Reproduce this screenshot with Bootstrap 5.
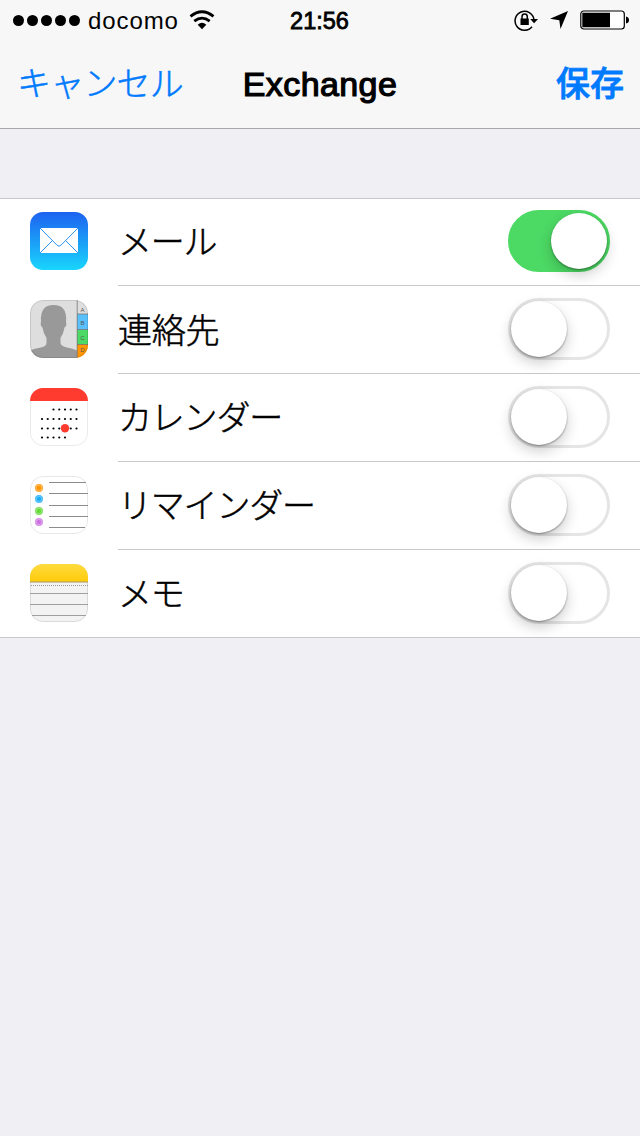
<!DOCTYPE html>
<html lang="ja">
<head>
<meta charset="utf-8">
<meta name="viewport" content="width=device-width, initial-scale=1">
<title>Exchange</title>
<link href="https://cdn.jsdelivr.net/npm/bootstrap@5.3.0/dist/css/bootstrap.min.css" rel="stylesheet">
<style>
body{background:#efeff4;color:#000;font-family:"Liberation Sans","Noto Sans CJK JP",sans-serif;min-height:100vh;overflow:hidden}
svg{display:block;flex:none}
.topbar{height:129px;background:#f7f7f7;border-bottom:1px solid #a7a7ac}
.status{height:40px;padding:0 11px 0 13px}
.side{flex:1 1 0}
.signal i{width:11px;height:11px;border-radius:50%;background:#000}
.signal{gap:3px}
.carrier{font:24px/28px "Liberation Sans",sans-serif;letter-spacing:.9px;margin:2px 0 0 8px}
.wifi{margin-left:10px}
.glyph{margin-left:12px}
.clock{font:23.500px/28px "Liberation Sans",sans-serif;-webkit-text-stroke:.8px #000;margin:2px 3px 0 0}
.titlebar{height:88px;padding:0 16px 0 17px}
.titlebar a{color:#007aff;font-size:34px;line-height:50px;font-family:"Noto Sans CJK JP",sans-serif;font-weight:300;letter-spacing:-.8px;-webkit-text-stroke:.5px #007aff;position:relative;top:-2px}
.titlebar a.save{font-weight:500;letter-spacing:0;-webkit-text-stroke:.8px #007aff}
.titlebar h1{font:34px/50px "Liberation Sans",sans-serif;letter-spacing:.4px;-webkit-text-stroke:1.200px #000;padding-right:1px}
.accounts{margin-top:69px;background:#fff;border-top:1px solid #c8c7cc;border-bottom:1px solid #c8c7cc;list-style:none}
.account{height:88px;padding-left:30px}
.account:first-child{margin-top:-1px}
.account:last-child{height:87px}
.account>svg{margin-top:14px}
.cell{height:88px;margin-left:30px;padding:0 30px 1px 0;border-bottom:1px solid #c8c7cc}
.account:last-child .cell{height:87px;border-bottom:0}
.cell label{font-family:"Noto Sans CJK JP",sans-serif;font-weight:300;font-size:34px;line-height:50px;letter-spacing:-1.200px;-webkit-text-stroke:.5px #000;padding-bottom:2px}
.cell label.kanji{letter-spacing:-.3px;padding-bottom:0}
.form-switch .form-check-input.toggle{width:102px;height:62px;margin:0;float:none;border:3px solid #e5e5e5;border-radius:31px;background:#fff;padding:0}
.toggle::before{content:"";display:block;width:56px;height:56px;border-radius:50%;background:#fff;box-shadow:0 1px 2px rgba(0,0,0,.38),0 6px 14px rgba(0,0,0,.2)}
.form-switch .form-check-input.toggle:checked{background:#4cd964;border-color:#4cd964}
.toggle:checked::before{margin-left:40px}
</style>
</head>
<body>
<header class="topbar">
  <div class="status d-flex align-items-center">
    <div class="side d-flex align-items-center">
      <div class="signal d-flex"><i></i><i></i><i></i><i></i><i></i></div>
      <span class="carrier">docomo</span>
      <svg class="wifi" width="26" height="20" viewBox="0 0 26 20"><path d="M1.500 6.400Q13-3 24.500 6.400M5.300 11.200Q13 5 20.700 11.200" fill="none" stroke="#000" stroke-width="2.800"/><path d="M8.700 14.800Q13 10.500 17.300 14.800L13 19.200Z"/></svg>
    </div>
    <span class="clock">21:56</span>
    <div class="side d-flex align-items-center justify-content-end">
      <svg width="24" height="22" viewBox="0 0 24 22"><path d="M18 17.700A9.500 9.500 0 1 1 20 10.500" fill="none" stroke="#000" stroke-width="1.500"/><path d="M16.200 10h7.800l-3.900 4.200zM6.500 9.500h8.300v6.500H6.500z"/><path d="M8 10V7.700a2.600 2.600 0 0 1 5.300 0V10" fill="none" stroke="#000" stroke-width="1.500"/></svg>
      <svg class="glyph" width="18" height="18" viewBox="0 0 18 18"><path d="M18 0L10.500 18 9.300 9.200 0 7.800z"/></svg>
      <svg class="glyph" width="49" height="20" viewBox="0 0 49 20"><rect x=".8" y="1" width="43.500" height="18" rx="3" fill="#fff" stroke="#000" stroke-width="1.200"/><path d="M2.300 2.800h27.700v14.500H2.300zM46 6.500q3 .5 3 3.500t-3 3.500z"/></svg>
    </div>
  </div>
  <nav class="titlebar d-flex align-items-center">
    <div class="side"><a href="#" class="text-decoration-none">キャンセル</a></div>
    <h1 class="m-0">Exchange</h1>
    <div class="side text-end"><a href="#" class="save text-decoration-none">保存</a></div>
  </nav>
</header>
<main>
<ul class="accounts p-0 mb-0">
  <li class="account d-flex">
    <svg width="58" height="58" viewBox="0 0 58 58"><defs><linearGradient id="sky" x2="0" y2="1"><stop stop-color="#1d62f0"/><stop offset="1" stop-color="#19d5fd"/></linearGradient></defs><rect width="58" height="58" rx="13" fill="url(#sky)"/><path fill="#fff" d="M10 16h38v25H10z"/><path d="M10 16l17 17.200q2 2 4 0L48 16M10 41l12.500-12.500M48 41L35.500 28.500" fill="none" stroke="#2c93f3" stroke-width="1"/></svg>
    <div class="cell d-flex align-items-center flex-grow-1"><label for="mail" class="flex-grow-1">メール</label><div class="form-switch p-0 d-flex"><input id="mail" class="form-check-input toggle" type="checkbox" role="switch" checked></div></div>
  </li>
  <li class="account d-flex">
    <svg width="58" height="58" viewBox="0 0 58 58"><defs><clipPath id="tile"><rect width="58" height="58" rx="13"/></clipPath></defs><g clip-path="url(#tile)"><path fill="#dedede" d="M0 0h58v58H0z"/><path fill="#999" d="M0 50.500Q4 48.500 11 47.500Q16.500 46 16.500 43V38Q13.500 34 12.500 27.500Q10 26 11 21.500Q9.800 5 23.500 5Q37.500 5 36 21.500Q37.200 26 34.500 27.500Q33.500 34 30.500 38V43Q31 46 37 47.500Q43 48.500 47 50.500V58H0z"/><path fill="#5ac0fb" d="M47 14h11v16H47z"/><path fill="#4cd964" d="M47 30h11v14H47z"/><path fill="#ff9500" d="M47 44h11v14H47z"/><path d="M47.200 0v58M47 14h11M47 29.500h11M47 44.500h11" stroke="#777" stroke-width=".8"/><g font-family="Liberation Sans,sans-serif" font-size="6" fill="#555" text-anchor="middle"><text x="52.500" y="11.500">A</text><text x="52.500" y="24.500">B</text><text x="52.500" y="39.500">C</text><text x="52.500" y="51.500">D</text></g><rect x=".5" y=".5" width="57" height="57" rx="12.500" fill="none" stroke="#000" stroke-opacity=".1"/></g></svg>
    <div class="cell d-flex align-items-center flex-grow-1"><label for="contacts" class="kanji flex-grow-1">連絡先</label><div class="form-switch p-0 d-flex"><input id="contacts" class="form-check-input toggle" type="checkbox" role="switch"></div></div>
  </li>
  <li class="account d-flex">
    <svg width="58" height="58" viewBox="0 0 58 58"><rect x=".5" y=".5" width="57" height="57" rx="12.500" fill="#fff" stroke="#ebebeb"/><path fill="#ff3b30" d="M0 13A13 13 0 0 1 13 0H45A13 13 0 0 1 58 13z"/><path d="M23.500 21.500h24M12 31h36M12 40.500h36M12 49.500h24" fill="none" stroke="#000" stroke-width="2.200" stroke-linecap="round" stroke-dasharray="0 5.750"/><circle cx="35" cy="40.300" r="4.200" fill="#ff3b30"/></svg>
    <div class="cell d-flex align-items-center flex-grow-1"><label for="calendar" class="flex-grow-1">カレンダー</label><div class="form-switch p-0 d-flex"><input id="calendar" class="form-check-input toggle" type="checkbox" role="switch"></div></div>
  </li>
  <li class="account d-flex">
    <svg width="58" height="58" viewBox="0 0 58 58"><rect x=".5" y=".5" width="57" height="57" rx="12.500" fill="#fff" stroke="#e8e8e8"/><path d="M19 6.500h37M19 17.500h39M19 29.500h39M19 40.500h39M19 51.500h36" stroke="#8c8c8c"/><g stroke-width="1"><circle cx="9" cy="12" r="3.700" fill="#ff9500" stroke="#ffac3a"/><circle cx="9" cy="23" r="3.700" fill="#1badf8" stroke="#55c1fa"/><circle cx="9" cy="35" r="3.700" fill="#63da38" stroke="#88e268"/><circle cx="9" cy="46" r="3.700" fill="#cc73e1" stroke="#d996e9"/></g><g fill="none" stroke="#fff" stroke-opacity=".45" stroke-width=".7"><circle cx="9" cy="12" r="2.700"/><circle cx="9" cy="23" r="2.700"/><circle cx="9" cy="35" r="2.700"/><circle cx="9" cy="46" r="2.700"/></g></svg>
    <div class="cell d-flex align-items-center flex-grow-1"><label for="reminders" class="flex-grow-1">リマインダー</label><div class="form-switch p-0 d-flex"><input id="reminders" class="form-check-input toggle" type="checkbox" role="switch"></div></div>
  </li>
  <li class="account d-flex">
    <svg width="58" height="58" viewBox="0 0 58 58"><defs><linearGradient id="pad" x2="0" y2="1"><stop stop-color="#fedb3e"/><stop offset="1" stop-color="#fecb09"/></linearGradient></defs><rect x=".5" y=".5" width="57" height="57" rx="12.500" fill="#f3f3f3" stroke="#dadada"/><path fill="url(#pad)" d="M0 18V13A13 13 0 0 1 13 0H45A13 13 0 0 1 58 13V18z"/><path d="M0 18h58" stroke="#a89a65"/><path d="M1 21.500h57" stroke="#999" stroke-dasharray="1 1"/><path d="M0 29.500h58M0 40.500h58M2 51.500h54" stroke="#a0a0a0"/></svg>
    <div class="cell d-flex align-items-center flex-grow-1"><label for="notes" class="flex-grow-1">メモ</label><div class="form-switch p-0 d-flex"><input id="notes" class="form-check-input toggle" type="checkbox" role="switch"></div></div>
  </li>
</ul>
</main>
<script src="https://cdn.jsdelivr.net/npm/bootstrap@5.3.0/dist/js/bootstrap.bundle.min.js"></script>
</body>
</html>
